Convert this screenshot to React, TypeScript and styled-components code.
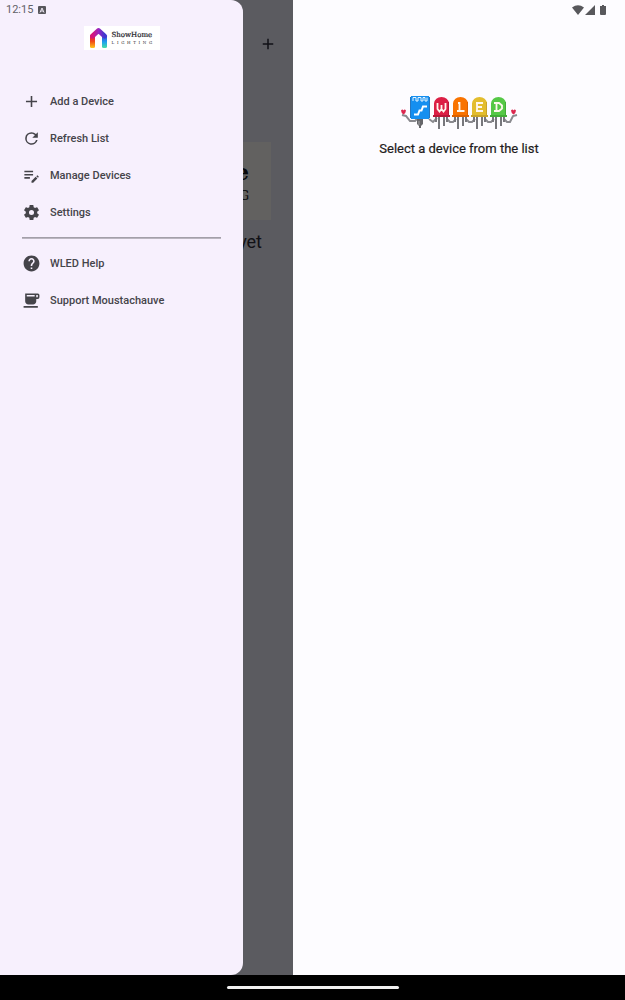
import React from "react";
import styled, { createGlobalStyle } from "styled-components";

const GlobalStyle = createGlobalStyle`
  * { box-sizing: border-box; }
  body {
    margin: 0;
    background: #000;
    font-family: Roboto, "Liberation Sans", sans-serif;
  }
`;

const Screen = styled.div`
  position: relative;
  display: flex;
  flex-direction: column;
  min-height: 100vh;
`;

const Panes = styled.main`
  position: relative;
  display: grid;
  grid-template-columns: 293fr 332fr;
  flex: 1;
`;

const ListPane = styled.section`
  display: flex;
  flex-direction: column;
  align-items: flex-end;
  background: #5b5b60;
  color: #111116;
  overflow: hidden;
`;

const ListBar = styled.header`
  display: flex;
  justify-content: flex-end;
  padding: 35px 16px 0 0;
`;

const IconButton = styled.button`
  display: flex;
  padding: 0;
  border: 0;
  background: none;
  color: inherit;
`;

const BrandCard = styled.div`
  display: flex;
  flex-direction: column;
  align-items: flex-end;
  width: 85%;
  height: 78px;
  margin: 89px 22px 0;
  padding: 16px 22px 0;
  background: #626160;
  color: #08080a;
  font-family: "DejaVu Serif", serif;
`;

const BrandBig = styled.span`
  font-size: 22px;
  line-height: 28px;
  font-weight: 700;
`;

const BrandSmall = styled.span`
  font-size: 12px;
  line-height: 20px;
`;

const EmptyText = styled.p`
  margin: 11px 31px 0;
  font-size: 18px;
  line-height: 22px;
`;

const DetailPane = styled.section`
  display: flex;
  flex-direction: column;
  align-items: center;
  padding-top: 94px;
  background: #fdfcff;
  color: #1d1b20;
`;

const DetailText = styled.p`
  margin: 9px 0 0;
  font-size: 13px;
  line-height: 16px;
  font-weight: 400;
  -webkit-text-stroke: 0.2px currentColor;
`;

const Drawer = styled.aside`
  position: absolute;
  inset: 0 auto 0 0;
  width: 38.9%;
  padding: 26px 22px 0;
  border-radius: 0 12px 12px 0;
  background: #f7f0fd;
  color: #45444a;
`;

const Brand = styled.div`
  display: flex;
  align-items: center;
  gap: 4px;
  width: 76px;
  height: 24px;
  margin: 0 auto;
  padding-left: 6px;
  background: #fff;
`;

const BrandWords = styled.div`
  display: flex;
  flex-direction: column;
  color: #222228;
  font-family: "DejaVu Serif", serif;
`;

const BrandName = styled.span`
  font-size: 7px;
  line-height: 9px;
  -webkit-text-stroke: 0.2px currentColor;
`;

const BrandTag = styled.span`
  display: flex;
  justify-content: space-between;
  font-size: 4px;
  line-height: 6px;
`;

const Menu = styled.nav`
  display: flex;
  flex-direction: column;
  padding-top: 33px;
`;

const MenuItem = styled.button`
  display: flex;
  align-items: center;
  gap: 9px;
  height: 37px;
  padding: 0;
  border: 0;
  background: none;
  color: inherit;
  font: 500 11px/16px Roboto, "Liberation Sans", sans-serif;
  text-align: left;
`;

const Divider = styled.hr`
  width: 100%;
  height: 1px;
  margin: 6px 0 7px;
  border: 0;
  background: #a39fa9;
  box-shadow: 0 1px #bbb6c0;
`;

const StatusBar = styled.div`
  position: absolute;
  inset: 0 0 auto 0;
  z-index: 2;
  display: flex;
  justify-content: space-between;
  align-items: center;
  height: 19px;
  padding: 0 17px 0 6px;
  color: #626167;
`;

const StatusGroup = styled.div`
  display: flex;
  align-items: center;
  gap: 5px;
  font-size: 11px;
  line-height: 19px;
`;

const NavBar = styled.footer`
  display: flex;
  justify-content: center;
  align-items: center;
  height: 25px;
  background: #000;
`;

const Handle = styled.div`
  width: 172px;
  height: 3px;
  border-radius: 2px;
  background: #f0f0f0;
`;

const paths = {
  add: "M19 13h-6v6h-2v-6H5v-2h6V5h2v6h6v2z",
  refresh:
    "M17.65 6.35A7.958 7.958 0 0 0 12 4a8 8 0 1 0 7.73 10h-2.08A6 6 0 1 1 12 6c1.66 0 3.14.69 4.22 1.78L13 11h7V4l-2.35 2.35z",
  manage:
    "M3 10h11v2H3v-2zm0-2h11V6H3v2zm0 8h7v-2H3v2zm15.01-3.13.71-.71a.996.996 0 0 1 1.41 0l.71.71c.39.39.39 1.02 0 1.41l-.71.71-2.12-2.12zm-.71.71-5.3 5.3V21h2.12l5.3-5.3-2.12-2.12z",
  settings:
    "M19.14 12.94c.04-.3.06-.61.06-.94 0-.32-.02-.64-.07-.94l2.03-1.58a.49.49 0 0 0 .12-.61l-1.92-3.32a.488.488 0 0 0-.59-.22l-2.39.96c-.5-.38-1.03-.7-1.62-.94l-.36-2.54a.484.484 0 0 0-.48-.41h-3.84c-.24 0-.43.17-.47.41l-.36 2.54c-.59.24-1.13.57-1.62.94l-2.39-.96c-.22-.08-.47 0-.59.22L2.74 8.87c-.12.21-.08.47.12.61l2.03 1.58c-.05.3-.09.63-.09.94s.02.64.07.94l-2.03 1.58a.49.49 0 0 0-.12.61l1.92 3.32c.12.22.37.29.59.22l2.39-.96c.5.38 1.03.7 1.62.94l.36 2.54c.05.24.24.41.48.41h3.84c.24 0 .44-.17.47-.41l.36-2.54c.59-.24 1.13-.56 1.62-.94l2.39.96c.22.08.47 0 .59-.22l1.92-3.32c.12-.22.07-.47-.12-.61l-2.01-1.58zM12 15.2A3.2 3.2 0 1 1 12 8.800a3.200 3.200 0 0 1 0 6.400z",
  help:
    "M12 2C6.480 2 2 6.480 2 12s4.480 10 10 10 10-4.480 10-10S17.520 2 12 2zm1 17h-2v-2h2v2zm2.070-7.750-.9.920C13.450 12.900 13 13.500 13 15h-2v-.5c0-1.100.45-2.100 1.170-2.830l1.240-1.260c.37-.36.59-.86.59-1.410 0-1.100-.9-2-2-2s-2 .9-2 2H8c0-2.210 1.790-4 4-4s4 1.790 4 4c0 .88-.36 1.680-.93 2.250z",
  coffee:
    "M20 3H4v10c0 2.210 1.790 4 4 4h6c2.210 0 4-1.790 4-4v-3h2a2 2 0 0 0 2-2V5a2 2 0 0 0-2-2zm0 5h-2V5h2v3zM6 5h10v2H6zM2 19h18v2H2z",
};

function Glyph({ name, size = 19 }: { name: keyof typeof paths; size?: number }) {
  return (
    <svg width={size} height={size} viewBox="0 0 24 24" fill="currentColor" fillRule="evenodd" aria-hidden="true">
      <path d={paths[name]} />
    </svg>
  );
}

function HouseMark() {
  return (
    <svg width="18" height="22" viewBox="0 0 18 22" fill="none" aria-hidden="true">
      <defs>
        <linearGradient id="warm" x1="0" y1="0" x2="0" y2="1">
          <stop offset="0" stopColor="#e0145a" />
          <stop offset="0.45" stopColor="#f04a18" />
          <stop offset="1" stopColor="#ffc81c" />
        </linearGradient>
        <linearGradient id="cool" x1="0" y1="0" x2="0" y2="1">
          <stop offset="0" stopColor="#3448d8" />
          <stop offset="0.5" stopColor="#1ea0ee" />
          <stop offset="1" stopColor="#46dfa4" />
        </linearGradient>
        <linearGradient id="roof" x1="0" y1="0" x2="1" y2="0">
          <stop offset="0" stopColor="#d81478" />
          <stop offset="0.5" stopColor="#9a24c0" />
          <stop offset="1" stopColor="#4038d0" />
        </linearGradient>
      </defs>
      <path d="M0 9h5v10.500q0 1.500-1.500 1.500h-2q-1.500 0-1.500-1.500z" fill="url(#warm)" />
      <path d="M12 9h5v10.500q0 1.500-1.500 1.500h-2q-1.500 0-1.500-1.500z" fill="url(#cool)" />
      <path d="M2.500 9 8.500 3.500 14.500 9" stroke="url(#roof)" strokeWidth="5" strokeLinejoin="round" strokeLinecap="round" />
    </svg>
  );
}

const leds = [
  { x: 33, fill: "#dc1f45", edge: "#b81838", mark: "M4.500 6v6l2 2.500 2-2.500V8v4l2 2.500 2-2.500V6" },
  { x: 52, fill: "#f97300", edge: "#dd6200", mark: "M7.500 5v9h5M6 6h2M5 14h3" },
  { x: 71, fill: "#e3bd2e", edge: "#c9a429", mark: "M5 6h7M6 6v8M6 10h5M5 14h7" },
  { x: 90, fill: "#55c846", edge: "#43ac38", mark: "M4 6h5l3 2.500v3L9 14H4M6.500 6v8" },
];

function WledLogo() {
  return (
    <svg width="118" height="38" viewBox="0 0 118 38" fill="none" role="img" aria-label="WLED">
      <g stroke="#8a8a8f" strokeWidth="2">
        <path d="M2 21 6 22 10 27 15 27 18 24" />
        <path d="M29 25l4 3 4-4M47 25l3 3h3l3-3M66 25l3 3h3l3-3M85 25l3 3h3l3-3M104 25l3 3h3l3-6 4-1" />
      </g>
      <path d="M17 25h6v5l-2 2v2h-2v-2l-2-2z" fill="#66666a" />
      <path d="M19 27v4" stroke="#a4a4a8" />
      <path d="M11 2h18v23H11z" fill="#158ff0" />
      <path d="M10 3h1v21h-1zM29 3h1v21h-1z" fill="#2676c0" />
      <path d="M13 7V3.500h3V7h2V3.500h3V7h2V3.500h2V7h2V3.500" stroke="#e6f5ff" strokeWidth="1" />
      <path d="M14 20.500h4l1.500-4h2l1.500-4h4" stroke="#fff" strokeWidth="2" />
      <path
        d="M1 16.500q1.500-2 2.500 0 1-2 2.500 0 0 2-2.500 4Q1 18.500 1 16.500zM111 16.500q1.500-2 2.500 0 1-2 2.500 0 0 2-2.500 4Q111 18.500 111 16.500z"
        fill="#dc264e"
      />
      {leds.map((led) => (
        <g key={led.x} transform={`translate(${led.x} 3)`}>
          <path d="M6 20v12M11 20v9M3 20v5M14 20v5" stroke="#77777c" strokeWidth="2" />
          <path d="M1 18V6.500Q2 0 8.500 0T16 6.500V18h1v2H0v-2z" fill={led.fill} />
          <path d="M0 18h17v2H0zM15 5h1v13h-1z" fill={led.edge} />
          <path d={led.mark} stroke="#fff7ee" strokeWidth="1.800" />
        </g>
      ))}
    </svg>
  );
}

const actions: { icon: keyof typeof paths; label: string }[] = [
  { icon: "add", label: "Add a Device" },
  { icon: "refresh", label: "Refresh List" },
  { icon: "manage", label: "Manage Devices" },
  { icon: "settings", label: "Settings" },
];

const links: { icon: keyof typeof paths; label: string }[] = [
  { icon: "help", label: "WLED Help" },
  { icon: "coffee", label: "Support Moustachauve" },
];

function NavigationDrawer() {
  return (
    <Drawer>
      <Brand>
        <HouseMark />
        <BrandWords>
          <BrandName>ShowHome</BrandName>
          <BrandTag>
            {"LIGHTING".split("").map((letter, i) => (
              <span key={i}>{letter}</span>
            ))}
          </BrandTag>
        </BrandWords>
      </Brand>
      <Menu>
        {actions.map((item) => (
          <MenuItem key={item.label} type="button">
            <Glyph name={item.icon} />
            {item.label}
          </MenuItem>
        ))}
        <Divider />
        {links.map((item) => (
          <MenuItem key={item.label} type="button">
            <Glyph name={item.icon} />
            {item.label}
          </MenuItem>
        ))}
      </Menu>
    </Drawer>
  );
}

export default function App() {
  return (
    <Screen>
      <GlobalStyle />
      <StatusBar>
        <StatusGroup>
          <span>12:15</span>
          <svg width="8" height="8" viewBox="0 0 8 8" aria-hidden="true">
            <rect width="8" height="8" rx="1" fill="#58575c" />
            <path d="M2 6.500 4 2l2 4.500M3 5h2" fill="none" stroke="#eee8f4" />
          </svg>
        </StatusGroup>
        <StatusGroup>
          <svg width="36" height="12" viewBox="0 0 36 12" fill="#58585c" aria-hidden="true">
            <path d="M0 3.500Q6-1 12 3.500L6 11zM13 11 23 1v10zM28 2h2V1h2v1h2v8q0 1-1 1h-4q-1 0-1-1z" />
          </svg>
        </StatusGroup>
      </StatusBar>
      <Panes>
        <ListPane>
          <ListBar>
            <IconButton type="button" aria-label="Add">
              <Glyph name="add" size={18} />
            </IconButton>
          </ListBar>
          <BrandCard>
            <BrandBig>e</BrandBig>
            <BrandSmall>G</BrandSmall>
          </BrandCard>
          <EmptyText>yet</EmptyText>
        </ListPane>
        <DetailPane>
          <WledLogo />
          <DetailText>Select a device from the list</DetailText>
        </DetailPane>
        <NavigationDrawer />
      </Panes>
      <NavBar>
        <Handle />
      </NavBar>
    </Screen>
  );
}
